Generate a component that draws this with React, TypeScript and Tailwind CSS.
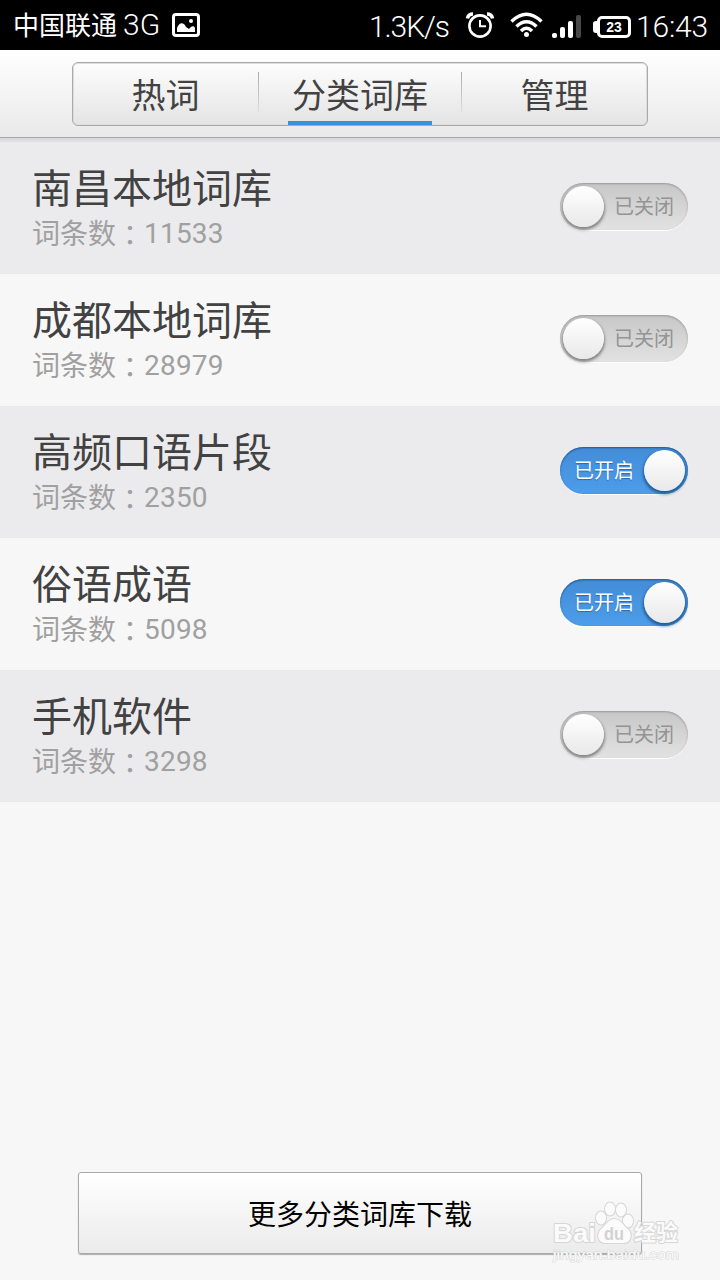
import React from "react";

const cjk = "font-['Roboto','Noto_Sans_CJK_SC',sans-serif]";

function StatusBar() {
  return (
    <header className="flex h-[50px] items-center justify-between bg-black pl-[13px] pr-[11px] text-white">
      <div className="flex h-full items-center">
        <span className="w-[103px] whitespace-nowrap pb-[2px] font-['Noto_Sans_CJK_SC',sans-serif] text-[26px] leading-[48px]">中国联通</span>
        <span className="ml-[7px] w-[40px] whitespace-nowrap font-['Roboto',sans-serif] text-[30px] font-light leading-[50px] tracking-[0.2px]">3G</span>
        <svg className="ml-[9px]" width="28" height="24" viewBox="0 0 28 24">
          <rect x="1.500" y="1.500" width="25" height="21" rx="2.500" fill="none" stroke="white" strokeWidth="3" />
          <path d="M5 19v-4c2-5 6-7 9-1l3 2c2-3 5-4 6-1v4z" fill="white" />
          <circle cx="19" cy="8" r="2" fill="white" />
        </svg>
      </div>
      <div className="flex h-full items-center">
        <span className="mr-[17px] w-[80px] whitespace-nowrap pt-[3px] font-['Roboto',sans-serif] text-[30px] font-light leading-[50px] tracking-[-1.1px]">1.3K/s</span>
        <svg className="-ml-px" width="30" height="26" viewBox="0 0 30 26" fill="none" stroke="white">
          <circle cx="15" cy="14" r="10.600" strokeWidth="2.600" />
          <path d="M15 8v6.300h6" strokeWidth="2" />
          <path d="M2.500 6.500C3 3.500 5 2 8 2M27.500 6.500C27 3.500 25 2 22 2" strokeWidth="3.500" />
        </svg>
        <svg className="ml-[15px]" width="33" height="26" viewBox="0 0 33 26" fill="none" stroke="white" strokeWidth="3.500">
          <path d="M1.500 9.500Q16.500-5 31.500 9.500" />
          <path d="M6.500 14.500Q16.500 5 26.500 14.500" />
          <path d="M11 19Q16.500 13.500 22 19" />
          <circle cx="16.500" cy="22.500" r="2.500" fill="white" stroke="none" />
        </svg>
        <div className="ml-[9px] flex h-[26px] items-end gap-[3px]">
          <i className="h-[5px] w-[5px] rounded-[2px] bg-white" />
          <i className="h-[11px] w-[5px] rounded-[2px] bg-white" />
          <i className="h-[17px] w-[5px] rounded-[2px] bg-white" />
          <i className="h-[23px] w-[5px] rounded-[2px] bg-[#484848]" />
        </div>
        <div className="ml-[12px] flex items-center pt-[4px]">
          <i className="h-[12px] w-[4px] rounded-l-[3px] bg-white" />
          <span className="h-[22px] w-[34px] rounded-[5px] border-[3px] border-white text-center font-['Liberation_Sans',sans-serif] text-[14px] font-bold leading-[16px]">23</span>
        </div>
        <span className="ml-[5px] w-[73px] whitespace-nowrap pt-[4px] font-['Roboto',sans-serif] text-[30px] font-light leading-[50px] tracking-[-0.2px]">16:43</span>
      </div>
    </header>
  );
}

function Divider() {
  return <i className="mt-[9px] h-[40px] w-px bg-linear-to-b from-[#aaa] to-[#ddd]" />;
}

function Tabs() {
  const label = "text-[34px] leading-[66px] text-[#424242]";
  return (
    <div className="flex h-[88px] justify-center border-b border-[#a9a9ab] bg-linear-to-b from-white to-[#e9e9e9] pt-[12px]">
      <nav className="flex h-[64px] w-[576px] rounded-[6px] border border-[#a9a9a9] bg-linear-to-b from-[#fdfdfd] to-[#e4e4e4] shadow-[inset_0_0_0_1px_#dddddd]">
        <div className={`w-[185px] text-center ${label}`}>热词</div>
        <Divider />
        <div className="flex w-[202px] justify-center">
          <div className={`h-[62px] w-[144px] border-b-4 border-[#3d8fd8] text-center ${label}`}>分类词库</div>
        </div>
        <Divider />
        <div className={`w-[185px] text-center ${label}`}>管理</div>
      </nav>
    </div>
  );
}

function Toggle({ on }: { on: boolean }) {
  return on ? (
    <div className="flex h-[47px] w-[128px] items-center justify-between rounded-full bg-linear-to-b from-[#438cd8] to-[#4d9dea] pl-[14px] pr-[3px] shadow-[inset_0_1px_2px_#20568f,0_1px_0_white]">
      <span className="text-[20px] leading-[46px] text-white [text-shadow:0_1px_1px_#2b69a8]">已开启</span>
      <i className="h-[41px] w-[41px] rounded-full bg-linear-to-b from-white to-[#e9e9e9] shadow-[0_2px_3px_1px_#235a94]" />
    </div>
  ) : (
    <div className="flex h-[47px] w-[128px] items-center justify-between rounded-full bg-linear-to-b from-[#c7c7c7] to-[#e2e2e2] pl-[3px] pr-[14px] shadow-[inset_0_1px_2px_#999,0_1px_0_white]">
      <i className="h-[41px] w-[41px] rounded-full bg-linear-to-b from-white to-[#e9e9e9] shadow-[0_2px_3px_1px_#858585]" />
      <span className="text-[20px] leading-[46px] text-[#949494]">已关闭</span>
    </div>
  );
}

const dictionaries = [
  { name: "南昌本地词库", count: 11533, on: false },
  { name: "成都本地词库", count: 28979, on: false },
  { name: "高频口语片段", count: 2350, on: true },
  { name: "俗语成语", count: 5098, on: true },
  { name: "手机软件", count: 3298, on: false },
];

function Watermark() {
  return (
    <svg className="absolute left-[550px] top-[1198px]" width="140" height="68" viewBox="0 0 140 68" aria-hidden="true">
      <g fill="#fbfbfb" stroke="#d6d6d6" strokeWidth="2" strokeLinejoin="round" style={{ paintOrder: "stroke" }}>
        <text x="3" y="44" fontSize="26" fontWeight="bold" fontFamily="Liberation Sans" textLength="43" lengthAdjust="spacingAndGlyphs">Bai</text>
        <ellipse cx="51" cy="20" rx="5" ry="6.500" />
        <ellipse cx="60" cy="11" rx="5" ry="6.500" />
        <ellipse cx="71" cy="12" rx="5" ry="6.500" />
        <ellipse cx="78" cy="23" rx="5" ry="6.500" />
        <path d="M64 21c-5 0-8 6-13 10-5 5-3 14 4 14h19c7 0 9-9 4-14-5-4-8-10-14-10z" />
        <text x="84" y="42" fontSize="22" fontWeight="bold" fontFamily="Noto Sans CJK SC" textLength="44">经验</text>
        <text x="3" y="61" fontSize="13" strokeWidth="1" fontFamily="Liberation Sans" textLength="126" lengthAdjust="spacingAndGlyphs">jingyan.baidu.com</text>
      </g>
      <text x="54" y="42" fontSize="19" fontWeight="bold" fill="#d2d2d2" fontFamily="Liberation Sans" textLength="20" lengthAdjust="spacingAndGlyphs">du</text>
    </svg>
  );
}

export default function App() {
  return (
    <div className={`relative flex h-[1280px] w-[720px] flex-col overflow-hidden bg-[#f7f7f7] ${cjk}`}>
      <StatusBar />
      <Tabs />
      <main className="flex-1">
        <div className="h-[4px] bg-linear-to-b from-[#d6d6d8] to-[#e3e3e5]" />
        {dictionaries.map((d, i) => (
          <section key={d.name} className={`flex h-[132px] justify-between px-[32px] ${i % 2 === 0 ? "bg-[#ebebed]" : "bg-[#f7f7f7]"}`}>
            <div className="pt-[22px]">
              <h2 className="text-[40px] leading-[51px] text-[#424242]">{d.name}</h2>
              <p className="flex text-[28px] leading-[38px] text-[#a0a0a0]">
                <span className="pt-px">词条数</span>
                <span className="font-['Noto_Sans_CJK_TC',sans-serif]" lang="zh-TW">：</span>
                <span className="tracking-[0.2px]">{d.count}</span>
              </p>
            </div>
            <div className="pt-[41px]"><Toggle on={d.on} /></div>
          </section>
        ))}
      </main>
      <footer className="flex h-[108px] justify-center">
        <button className="h-[82px] w-[564px] rounded-[3px] border border-[#a9a9a9] bg-linear-to-b from-white to-[#ebebeb] pt-[5px] text-[28px] text-black shadow-[0_1px_1px_#aaa]">更多分类词库下载</button>
      </footer>
      <Watermark />
    </div>
  );
}
